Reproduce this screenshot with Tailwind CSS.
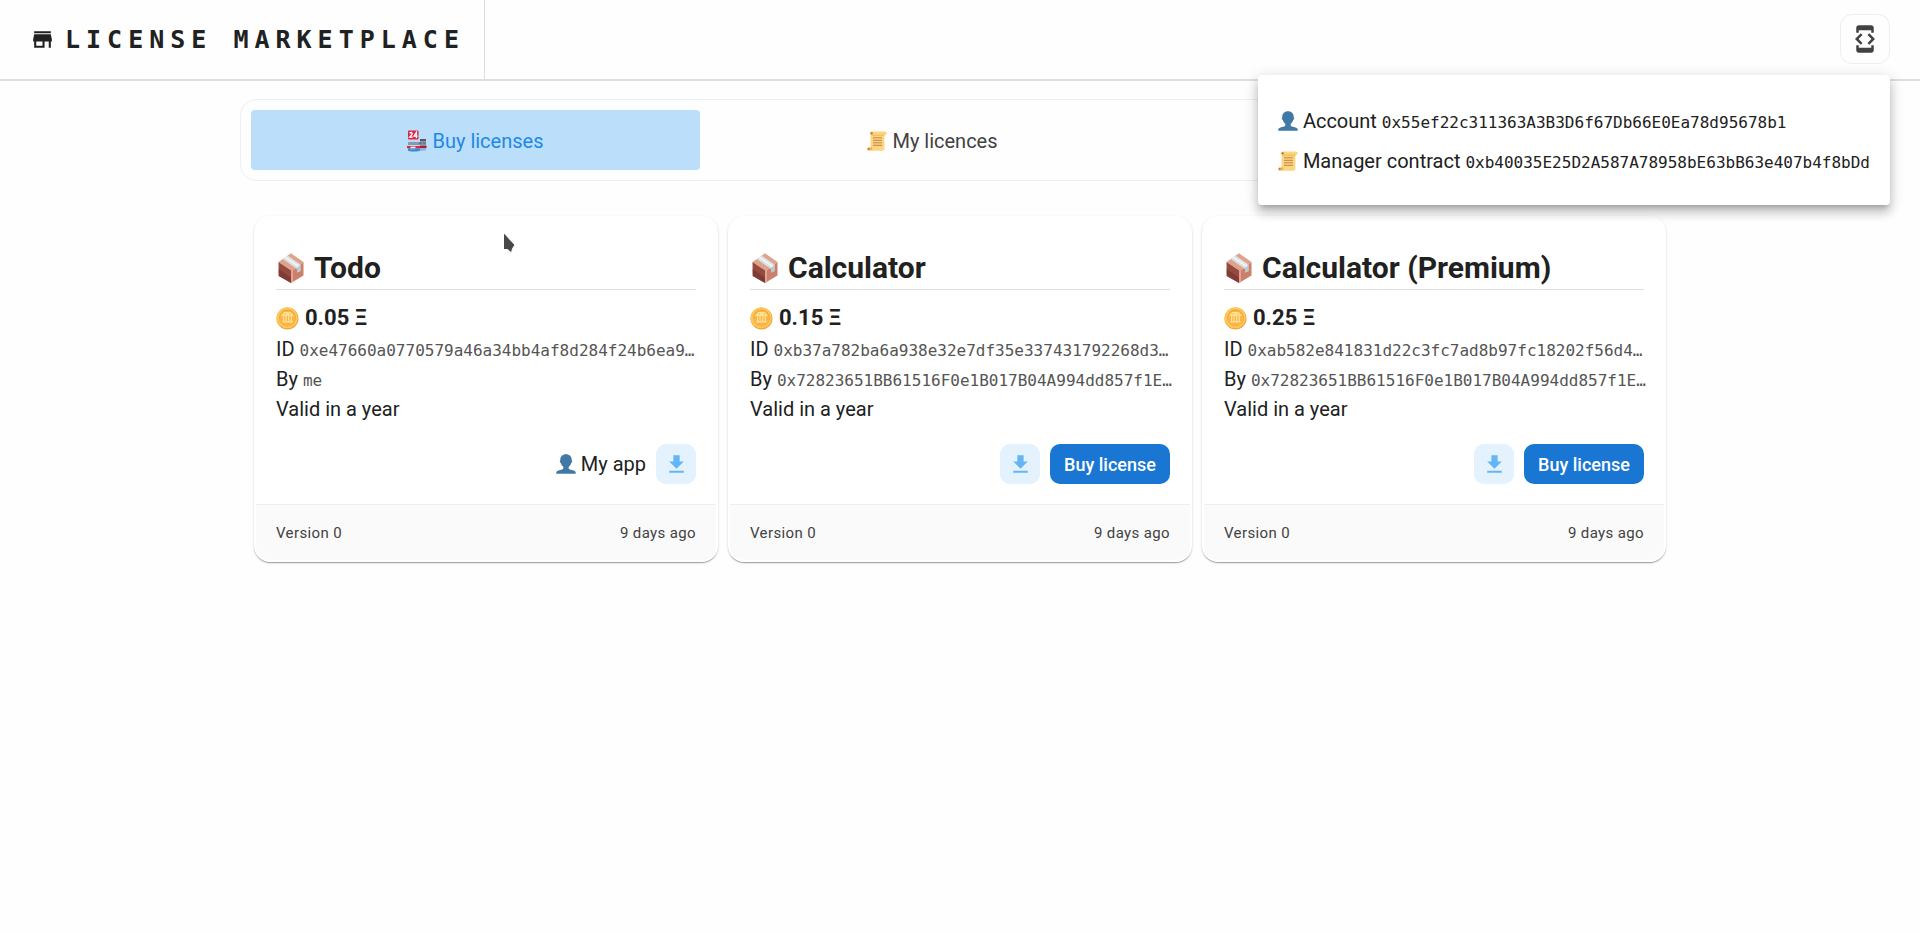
<!DOCTYPE html>
<html lang="en">
<head>
<meta charset="utf-8">
<meta name="viewport" content="width=device-width, initial-scale=1">
<title>License Marketplace</title>
<script src="https://cdn.jsdelivr.net/npm/@tailwindcss/browser@4"></script>
</head>
<body class="min-h-screen bg-[#fefefe] font-[Roboto,sans-serif] text-xl text-[#212121]">

<!-- Shared icons -->
<svg class="hidden" aria-hidden="true">
  <symbol id="store" viewBox="0 0 24 24"><path fill="currentColor" d="M20 4H4v2h16V4zm1 10v-2l-1-5H4l-1 5v2h1v6h10v-6h4v6h2v-6h1zm-9 4H6v-4h6v4z"/></symbol>
  <symbol id="device" viewBox="0 0 24 24"><path fill="currentColor" d="M7 5h10v2h2V3c0-1.1-.9-2-2-2H7c-1.1 0-2 .9-2 2v4h2V5zm8.410 11.590L20 12l-4.590-4.590L14 8.830 17.170 12 14 15.170l1.410 1.420zM10 15.170L6.830 12 10 8.830 8.590 7.410 4 12l4.590 4.590L10 15.170zM17 19H7v-2H5v4c0 1.100.9 2 2 2h10c1.100 0 2-.9 2-2v-4h-2v2z"/></symbol>
  <symbol id="download" viewBox="0 0 24 24"><path fill="currentColor" d="M19 9h-4V3H9v6H5l7 7 7-7zM5 18v2h14v-2H5z"/></symbol>
  <symbol id="person" viewBox="0 0 20 20"><path fill="#4079a5" d="M10 0.300c3.600 0 5.700 2.300 5.700 5.600 0 .5.500.6.500 1.400 0 .9-.5 1.500-1 1.700-.5 1.700-1.300 2.900-2.500 3.700v1.600c0 .7.500 1.100 1.300 1.300l3.600.9c1.600.5 2.200 1.300 2.200 3.200H.2c0-1.900.6-2.700 2.200-3.200l3.600-.9c.8-.2 1.300-.6 1.300-1.300v-1.600C6.100 11.900 5.300 10.700 4.800 9c-.5-.2-1-.8-1-1.700 0-.8.500-.9.500-1.400C4.300 2.600 6.400.3 10 .3z"/></symbol>
  <symbol id="scroll" viewBox="0 0 20 20">
    <path fill="#fbd67c" d="M4.500.4h13.300c1.200 0 1.900.8 1.900 1.900s-.8 1.800-1.900 1.800h-.4v13.600c0 1.200-.8 2-2 2H2.200c-1.200 0-2-.8-2-1.800s.8-1.700 1.900-1.700h1.500V4H4.400C3.300 4 2.700 3.200 2.700 2.200S3.400.4 4.500.4z"/>
    <path fill="#e8ad4e" d="M4.300 3.700h13.100v.8H4.900zM3.600 16.200h1.200c.6.800.6 2 0 2.800H2.200c1.200-.2 1.600-1.400 1.400-2.800z"/>
    <circle cx="4.700" cy="2.300" r="1.100" fill="#a5674a"/><circle cx="1.700" cy="18" r="1.200" fill="#d77552"/>
    <path stroke="#c97f50" stroke-width="1" d="M6 6.800h9M6 9.300h9M6 11.800h9M6 14.300h9"/>
  </symbol>
  <symbol id="shop" viewBox="0 0 20 22">
    <path fill="#8d969f" d="M1 10h18v7H1z"/><path fill="#c7d6e2" d="M0 10h13v2H0zM0 15h19v1H0z"/><path fill="#5d5560" d="M13 9h6v2h-6z"/>
    <path fill="#6ba3d3" d="M1 12.300h3v2H1zM5 12.300h2v2H5zM8 12.300h2v2H8z"/><path fill="#54789d" d="M12 12.300h3v2h-3zM16 12.300h2.500v2H16z"/>
    <path fill="#dc2747" d="M0 16h13v2.200H0z"/><path fill="#9c1f47" d="M13 15.500h6.500v2.700H13z"/>
    <path fill="#e7f1f7" d="M3.500 16.600h5v1.700h-5z"/><path fill="#4288c8" d="M1 18.200h12v2.600l-3 .7H4l-3-.8z"/><path fill="#8db3d3" d="M13 18.200h6v2l-6 .8zM3 18.500h5v1H3z"/>
    <rect x="1" y=".4" width="10.500" height="9" rx="1" fill="#dc2644"/>
    <path fill="none" stroke="#fff" stroke-width="1.300" d="M2.600 3.300q1.500-1.500 2.500-.2.500.9-.7 2.200L2.700 7.200h3M9.400 8.200V2.500L7 6.200h3.700"/>
  </symbol>
  <symbol id="package" viewBox="0 0 25 30">
    <path fill="#dfa38b" d="M0 9 12.500.3 25 9 13.500 18z"/><path fill="#96493e" d="M0 9l13.500 9-1 12L.2 23z"/><path fill="#cc806b" d="M13.500 18 25 9v13.500L12.500 30z"/>
    <path fill="#6d302e" d="M.1 16 13 25l-.5 5L.2 23z" opacity=".55"/><path fill="#e2a591" d="m12.500 17.500 2-1.500v13l-2 1z"/>
    <path fill="#dae1e6" d="m4.200 6 4.800-3.500 13 9V18l-3.500 1.500V16z"/><path fill="#bcc7ce" d="m18.500 14.800 3.500-3V18l-3.500 1.500z"/><path fill="#f2f4f5" d="m6 4.800 1.500-1.100 13.200 9.100-1.300 1.100z"/>
  </symbol>
  <symbol id="coin" viewBox="0 0 24 24">
    <circle cx="12" cy="12" r="11.500" fill="#eda63a"/><circle cx="11.700" cy="11.300" r="11" fill="#ffc856"/><circle cx="12" cy="11.500" r="8.800" fill="#f2a63a"/><circle cx="12" cy="12" r="8.300" fill="#f9b54a"/>
    <path fill="none" stroke="#ffe597" stroke-width="1.200" d="M6.500 8.500 9 5.800h6l2.500 2.700zM8 9v6M10.500 9v6M13.300 9v6M16 9v6M6.500 15.500h11M10 7.300h4"/>
  </symbol>
</svg>

<header class="relative flex h-[81px] items-stretch justify-between border-b-2 border-[#dedede] bg-[#fefefe]">
  <h1 class="flex items-center gap-[10px] border-r border-[#dedede] pr-[19px] pl-[30px] font-['DejaVu_Sans_Mono','Liberation_Mono',monospace] text-[25px] font-bold tracking-[6px]">
    <svg class="size-[25px]"><use href="#store"/></svg>LICENSE MARKETPLACE
  </h1>
  <div class="relative mr-[30px] flex items-start pt-[14px]">
    <button type="button" aria-label="Developer details" aria-expanded="true" class="grid size-[50px] place-items-center rounded-xl border border-[#eeeeee] text-[#424242]"><svg class="size-[30px]"><use href="#device"/></svg></button>
    <!-- Account popover -->
    <section class="absolute top-[75px] right-0 z-10 w-max rounded bg-white px-5 pt-[26px] pb-6 whitespace-nowrap shadow-[0_5px_5px_-3px_rgba(0,0,0,0.2),0_8px_10px_1px_rgba(0,0,0,0.14),0_3px_14px_2px_rgba(0,0,0,0.12)]">
      <p class="flex h-10 items-center gap-[5px]"><svg class="size-5"><use href="#person"/></svg><span>Account <code class="font-['DejaVu_Sans_Mono','Liberation_Mono',monospace] text-base">0x55ef22c311363A3B3D6f67Db66E0Ea78d95678b1</code></span></p>
      <p class="flex h-10 items-center gap-[5px]"><svg class="size-5"><use href="#scroll"/></svg><span>Manager contract <code class="font-['DejaVu_Sans_Mono','Liberation_Mono',monospace] text-base">0xb40035E25D2A587A78958bE63bB63e407b4f8bDd</code></span></p>
    </section>
  </div>
</header>

<main class="mx-auto w-3/4 pt-[18px]">
  <nav class="grid h-[82px] grid-cols-[449fr_449fr_504fr] gap-2 rounded-2xl border border-[#eeeeee] p-[10px]">
    <button type="button" aria-current="page" class="flex items-center justify-center gap-[5px] rounded bg-[#bbdefb] pt-[2px] text-[#1e88e5]"><svg class="h-[22px] w-5"><use href="#shop"/></svg>Buy licenses</button>
    <button type="button" class="flex items-center justify-center gap-[5px] rounded pt-[2px] text-[#424242]"><svg class="size-5"><use href="#scroll"/></svg>My licences</button>
  </nav>

  <div class="mt-[35px] grid grid-cols-3 gap-[10px] px-[14px]">
    <article class="min-w-0 overflow-hidden rounded-2xl border-2 border-white bg-white shadow-[0_1px_1px_0_rgba(0,0,0,0.14),0_2px_1px_-1px_rgba(0,0,0,0.2),0_1px_3px_0_rgba(0,0,0,0.12)]">
      <div class="px-5 pt-[26px] pb-5">
        <h2 class="flex h-[46px] items-center gap-[10px] border-b border-[#dedede] pt-[2px] pl-[2px] text-[30px] font-bold"><svg class="h-[30px] w-[26px]"><use href="#package"/></svg>Todo</h2>
        <p class="mt-[13px] flex h-[30px] items-center gap-[6px] text-[22px] font-bold"><svg class="size-[23px]"><use href="#coin"/></svg>0.05 Ξ</p>
        <p class="mt-px h-[30px] leading-[30px] whitespace-nowrap">ID <code class="font-['DejaVu_Sans_Mono','Liberation_Mono',monospace] text-base text-[#555555]">0xe47660a0770579a46a34bb4af8d284f24b6ea9…</code></p>
        <p class="h-[30px] leading-[30px] whitespace-nowrap">By <code class="font-['DejaVu_Sans_Mono','Liberation_Mono',monospace] text-base text-[#555555]">me</code></p>
        <p class="h-[30px] leading-[30px]">Valid in a year</p>
        <div class="mt-5 flex h-10 items-center justify-end gap-[10px]">
          <span class="flex items-center gap-[5px]"><svg class="size-5"><use href="#person"/></svg>My app</span>
          <button type="button" aria-label="Download Todo" class="grid size-10 place-items-center rounded-[10px] bg-[#e3f2fd] text-[#64b5f6]"><svg class="size-[25px]"><use href="#download"/></svg></button>
        </div>
      </div>
      <footer class="flex h-14 items-center justify-between border-t border-[#eeeeee] bg-[#fafafa] px-5 pt-[2px] text-[15px] tracking-wide text-[#424242]"><span>Version 0</span><span>9 days ago</span></footer>
    </article>

    <article class="min-w-0 overflow-hidden rounded-2xl border-2 border-white bg-white shadow-[0_1px_1px_0_rgba(0,0,0,0.14),0_2px_1px_-1px_rgba(0,0,0,0.2),0_1px_3px_0_rgba(0,0,0,0.12)]">
      <div class="px-5 pt-[26px] pb-5">
        <h2 class="flex h-[46px] items-center gap-[10px] border-b border-[#dedede] pt-[2px] pl-[2px] text-[30px] font-bold"><svg class="h-[30px] w-[26px]"><use href="#package"/></svg>Calculator</h2>
        <p class="mt-[13px] flex h-[30px] items-center gap-[6px] text-[22px] font-bold"><svg class="size-[23px]"><use href="#coin"/></svg>0.15 Ξ</p>
        <p class="mt-px h-[30px] leading-[30px] whitespace-nowrap">ID <code class="font-['DejaVu_Sans_Mono','Liberation_Mono',monospace] text-base text-[#555555]">0xb37a782ba6a938e32e7df35e337431792268d3…</code></p>
        <p class="h-[30px] leading-[30px] whitespace-nowrap">By <code class="font-['DejaVu_Sans_Mono','Liberation_Mono',monospace] text-base text-[#555555]">0x72823651BB61516F0e1B017B04A994dd857f1E…</code></p>
        <p class="h-[30px] leading-[30px]">Valid in a year</p>
        <div class="mt-5 flex h-10 items-center justify-end gap-[10px]">
          <button type="button" aria-label="Download Calculator" class="grid size-10 place-items-center rounded-[10px] bg-[#e3f2fd] text-[#64b5f6]"><svg class="size-[25px]"><use href="#download"/></svg></button>
          <button type="button" class="h-10 w-[120px] rounded-[10px] bg-[#1976d2] pt-px text-lg font-medium text-white">Buy license</button>
        </div>
      </div>
      <footer class="flex h-14 items-center justify-between border-t border-[#eeeeee] bg-[#fafafa] px-5 pt-[2px] text-[15px] tracking-wide text-[#424242]"><span>Version 0</span><span>9 days ago</span></footer>
    </article>

    <article class="min-w-0 overflow-hidden rounded-2xl border-2 border-white bg-white shadow-[0_1px_1px_0_rgba(0,0,0,0.14),0_2px_1px_-1px_rgba(0,0,0,0.2),0_1px_3px_0_rgba(0,0,0,0.12)]">
      <div class="px-5 pt-[26px] pb-5">
        <h2 class="flex h-[46px] items-center gap-[10px] border-b border-[#dedede] pt-[2px] pl-[2px] text-[30px] font-bold"><svg class="h-[30px] w-[26px]"><use href="#package"/></svg>Calculator (Premium)</h2>
        <p class="mt-[13px] flex h-[30px] items-center gap-[6px] text-[22px] font-bold"><svg class="size-[23px]"><use href="#coin"/></svg>0.25 Ξ</p>
        <p class="mt-px h-[30px] leading-[30px] whitespace-nowrap">ID <code class="font-['DejaVu_Sans_Mono','Liberation_Mono',monospace] text-base text-[#555555]">0xab582e841831d22c3fc7ad8b97fc18202f56d4…</code></p>
        <p class="h-[30px] leading-[30px] whitespace-nowrap">By <code class="font-['DejaVu_Sans_Mono','Liberation_Mono',monospace] text-base text-[#555555]">0x72823651BB61516F0e1B017B04A994dd857f1E…</code></p>
        <p class="h-[30px] leading-[30px]">Valid in a year</p>
        <div class="mt-5 flex h-10 items-center justify-end gap-[10px]">
          <button type="button" aria-label="Download Calculator (Premium)" class="grid size-10 place-items-center rounded-[10px] bg-[#e3f2fd] text-[#64b5f6]"><svg class="size-[25px]"><use href="#download"/></svg></button>
          <button type="button" class="h-10 w-[120px] rounded-[10px] bg-[#1976d2] pt-px text-lg font-medium text-white">Buy license</button>
        </div>
      </div>
      <footer class="flex h-14 items-center justify-between border-t border-[#eeeeee] bg-[#fafafa] px-5 pt-[2px] text-[15px] tracking-wide text-[#424242]"><span>Version 0</span><span>9 days ago</span></footer>
    </article>
  </div>
</main>

<!-- Mouse pointer -->
<svg class="pointer-events-none absolute top-[232px] left-[503px] h-[22px] w-[14px]" viewBox="0 0 14 22" aria-hidden="true"><path fill="#484848" stroke="#fff" stroke-width="1" d="M.5.500v17h4l4 3.500 1-4.500 2.500-3.500z"/></svg>
</body>
</html>
